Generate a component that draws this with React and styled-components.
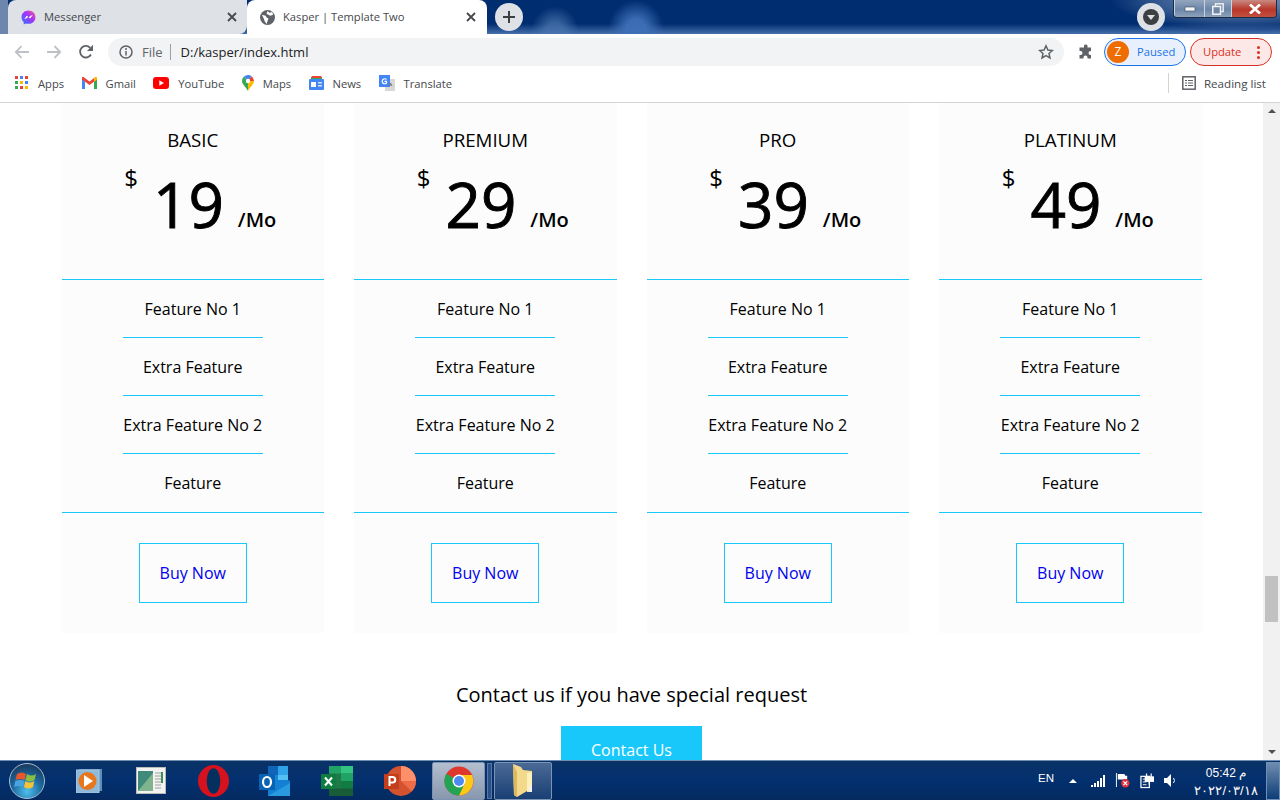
// Imports
import React from "react";
import styled, { createGlobalStyle } from "styled-components";

// Data
const plans = [
	{ name: "BASIC", price: 19 },
	{ name: "PREMIUM", price: 29 },
	{ name: "PRO", price: 39 },
	{ name: "PLATINUM", price: 49 },
];
const features = ["Feature No 1", "Extra Feature", "Extra Feature No 2", "Feature"];

// Small drawings
const Close = () => (
	<svg width="10" height="10" viewBox="0 0 10 10"><path d="M1 1l8 8M9 1l-8 8" stroke="#45484d" strokeWidth="1.8" /></svg>
);

const Plus = () => (
	<svg width="12" height="12" viewBox="0 0 12 12"><path d="M6 0v12M0 6h12" stroke="#3c4043" strokeWidth="2" /></svg>
);

const Globe = () => (
	<svg width="15" height="15" viewBox="0 0 16 16">
		<circle cx="8" cy="8" r="8" fill="#5f6368" />
		<path d="M2 5l4 1 1 2 2 1-1 3-1 3-2-3-1-3zM8 1l2 2 3-1 1 3-3 1-2-1-2-1z" fill="#fff" />
	</svg>
);

const Messenger = () => (
	<svg width="15" height="15" viewBox="0 0 16 16">
		<defs>
			<linearGradient id="ms" x1="0" y1="1" x2="1" y2="0">
				<stop offset="0" stopColor="#2a7bff" />
				<stop offset=".55" stopColor="#a033ff" />
				<stop offset="1" stopColor="#ff5c87" />
			</linearGradient>
		</defs>
		<path d="M8 .5C3.8.5.6 3.5.6 7.6c0 2.1.9 4 2.3 5.2V15.500l2.300-1.200c.9.300 1.800.4 2.800.4 4.200 0 7.400-3 7.400-7.100S12.200.5 8 .5z" fill="url(#ms)" />
		<path d="M3.500 9.800l2.500-3.700 2.200 1.600 2.200-1.600 2.100-.8-2.700 3.700-2.200-1.600-2.100 1.600z" fill="#fff" />
	</svg>
);

const Back = ({ flip }) => (
	<svg width="16" height="14" viewBox="0 0 16 14" style={ flip ? { transform: "scaleX(-1)" } : undefined }>
		<path d="M15 7H2M7.500 1.200L1.800 7l5.700 5.800" fill="none" stroke="#bdc1c6" strokeWidth="1.800" />
	</svg>
);

const Reload = () => (
	<svg width="16" height="16" viewBox="0 0 16 16">
		<path d="M13 10.500A5.800 5.800 0 1 1 12.200 3.800" fill="none" stroke="#5f6368" strokeWidth="1.800" />
		<path d="M15 .8V7H9z" fill="#5f6368" />
	</svg>
);

const Info = () => (
	<svg width="14" height="14" viewBox="0 0 14 14">
		<circle cx="7" cy="7" r="6" fill="none" stroke="#5f6368" strokeWidth="1.500" />
		<path d="M7 6v4.500" stroke="#5f6368" strokeWidth="1.500" />
		<circle cx="7" cy="4" r="1" fill="#5f6368" />
	</svg>
);

const Star = () => (
	<svg width="16" height="16" viewBox="0 0 16 16">
		<path d="M8 1.800l1.900 4.200 4.500.5-3.400 3 1 4.500L8 11.700 4 14l1-4.500-3.400-3 4.500-.5z" fill="none" stroke="#5f6368" strokeWidth="1.500" />
	</svg>
);

const Puzzle = () => (
	<svg width="16" height="16" viewBox="0 0 16 16">
		<path d="M6 1.500a2 2 0 0 1 3.500 0V3.500h3.500V7h-.5a2 2 0 0 0 0 4h.5v3.500H9.500v-1a2 2 0 0 0-4 0v1H1.500V11h1a2 2 0 0 0 0-4h-1V3.500H6z" fill="#5f6368" />
	</svg>
);

const AppsGrid = () => (
	<svg width="14" height="14" viewBox="0 0 14 14">
		<rect x="0" y="0" width="3" height="3" fill="#ea4335" />
		<rect x="5" y="0" width="3" height="3" fill="#4285f4" />
		<rect x="10" y="0" width="3" height="3" fill="#ea4335" />
		<rect x="0" y="5" width="3" height="3" fill="#34a853" />
		<rect x="5" y="5" width="3" height="3" fill="#fbbc04" />
		<rect x="10" y="5" width="3" height="3" fill="#4285f4" />
		<rect x="0" y="10" width="3" height="3" fill="#34a853" />
		<rect x="5" y="10" width="3" height="3" fill="#ea4335" />
		<rect x="10" y="10" width="3" height="3" fill="#fbbc04" />
	</svg>
);

const Gmail = () => (
	<svg width="15" height="12" viewBox="0 0 15 12">
		<path d="M0 1.500V12h3V4.500z" fill="#4285f4" />
		<path d="M15 1.500V12h-3V4.500z" fill="#34a853" />
		<path d="M0 0v2.500l7.500 5.500L15 2.500V0l-1.500 0L7.500 4.500 1.500 0z" fill="#ea4335" />
		<path d="M12 1.200L13.500 0H15v2.500L12 4.700z" fill="#fbbc04" />
	</svg>
);

const YouTube = () => (
	<svg width="16" height="12" viewBox="0 0 16 12">
		<rect width="16" height="12" rx="3" fill="#f00" />
		<path d="M6.300 3.300L11 6l-4.700 2.700z" fill="#fff" />
	</svg>
);

const Maps = () => (
	<svg width="12" height="16" viewBox="0 0 12 16">
		<path d="M6 16C4.500 12.800 0 9.500 0 6a6 6 0 0 1 2-4.500L6 6z" fill="#34a853" />
		<path d="M2 1.500A6 6 0 0 1 6 0c1.500 0 2.600.5 3.500 1.300L6 6z" fill="#4285f4" />
		<path d="M9.500 1.300A6 6 0 0 1 12 6L6 6z" fill="#ea4335" />
		<path d="M12 6c0 3.500-4.500 6.800-6 10L6 6z" fill="#fbbc04" />
		<circle cx="6" cy="6" r="2.200" fill="#fff" />
	</svg>
);

const News = () => (
	<svg width="15" height="14" viewBox="0 0 15 14">
		<path d="M2 1h11v3H2z" fill="#34a853" />
		<path d="M3 0h9l1 2H2z" fill="#ea4335" />
		<rect y="3" width="15" height="11" rx="1" fill="#4285f4" />
		<rect x="2" y="6" width="5" height="5" fill="#fff" />
		<rect x="9" y="6" width="4" height="1.500" fill="#d2e3fc" />
		<rect x="9" y="9" width="4" height="1.500" fill="#d2e3fc" />
	</svg>
);

const TranslateIcon = () => (
	<svg width="16" height="16" viewBox="0 0 16 16">
		<rect x="6" y="4" width="10" height="12" fill="#d8d8d8" />
		<path d="M0 0h11v12H0z" fill="#4285f4" />
		<path d="M9 9l1.500-3 1.500 3M9.500 8h2" stroke="#777" strokeWidth="1" fill="none" transform="translate(1 2)" />
		<path d="M7.500 4.500A2.500 2.500 0 1 0 7.500 8V6.300H5.500" fill="none" stroke="#fff" strokeWidth="1.200" />
	</svg>
);

const ReadingIcon = () => (
	<svg width="14" height="14" viewBox="0 0 14 14">
		<rect x=".8" y=".8" width="12.400" height="12.400" fill="none" stroke="#5f6368" strokeWidth="1.500" />
		<path d="M3 4.500h2M6 4.500h5M3 7h2M6 7h5M3 9.500h2M6 9.500h5" stroke="#5f6368" strokeWidth="1.200" />
	</svg>
);

// Window button glyphs
const MinGlyph = () => (
	<svg width="12" height="6" viewBox="0 0 12 6"><rect x="1" y="1" width="10" height="4" fill="#f4f4f4" stroke="#3a4a60" strokeWidth=".6" /></svg>
);

const RestoreGlyph = () => (
	<svg width="12" height="12" viewBox="0 0 12 12">
		<rect x="3.500" y=".8" width="7.700" height="7.700" fill="none" stroke="#e8ecf2" strokeWidth="1.500" />
		<rect x=".8" y="3.500" width="7.700" height="7.700" fill="#7088a8" stroke="#f4f4f4" strokeWidth="1.500" />
	</svg>
);

const CloseGlyph = () => (
	<svg width="14" height="10" viewBox="0 0 14 10"><path d="M2 .5l10 9M12 .5l-10 9" stroke="#fff" strokeWidth="2.800" /></svg>
);

// Taskbar icons
const StartOrb = () => (
	<svg width="38" height="38" viewBox="0 0 38 38">
		<defs>
			<radialGradient id="orb" cx=".5" cy=".8" r=".75">
				<stop offset="0" stopColor="#4fc0ee" />
				<stop offset=".55" stopColor="#1d6aa0" />
				<stop offset="1" stopColor="#1a3d63" />
			</radialGradient>
		</defs>
		<circle cx="19" cy="19" r="17.500" fill="url(#orb)" stroke="#a9bed1" strokeWidth="1" />
		<path d="M9 12c3-2 6-2 9 0l-1.500 6c-3-1.500-6-1.500-9 0z" fill="#e8562a" />
		<path d="M19 12c3 2 6 2 9 0l-1.500 6c-3 2-6 2-9 0z" fill="#8cbf3f" />
		<path d="M7.300 19c3-1.500 6-1.500 9 0L15 25c-3-1.500-6-1.500-9 0z" fill="#4aa3e0" />
		<path d="M17.300 19c3 2 6 2 9 0L25 25c-3 2-6 2-9 0z" fill="#f6c23a" />
	</svg>
);

const MediaPlayer = () => (
	<svg width="26" height="25" viewBox="0 0 26 25">
		<rect x="3" y="1" width="23" height="22" fill="#5f8fb8" />
		<rect x="0" y="2" width="23" height="23" fill="#8fb9d8" stroke="#a8c8e2" />
		<circle cx="11.500" cy="13" r="9" fill="#e8761c" />
		<path d="M8 7l9 6-9 6z" fill="#fff" />
	</svg>
);

const AppWindow = () => (
	<svg width="30" height="27" viewBox="0 0 30 27">
		<rect x=".5" y=".5" width="29" height="26" fill="#f2f3f0" stroke="#b8bcb8" />
		<rect x="2" y="4" width="15" height="20" fill="#3f8a7a" />
		<path d="M2 24L17 6v18z" fill="#7fb48f" />
		<path d="M19 6h6M19 9h6M19 12h6M19 15h6M19 18h6M19 21h6" stroke="#9aa09c" />
		<rect x="25" y="5" width="2" height="11" fill="#3d8f5a" />
	</svg>
);

const Opera = () => (
	<svg width="31" height="32" viewBox="0 0 31 32">
		<ellipse cx="15.500" cy="16" rx="15.500" ry="16" fill="#d5121e" />
		<ellipse cx="15.500" cy="16" rx="6.800" ry="12.800" fill="#03305f" />
	</svg>
);

const Outlook = () => (
	<svg width="32" height="30" viewBox="0 0 32 30">
		<rect x="9" y="0" width="10" height="9" fill="#0f66b8" />
		<rect x="19" y="0" width="10" height="9" fill="#2fa2e8" />
		<rect x="9" y="9" width="10" height="9" fill="#1a86d8" />
		<rect x="19" y="9" width="10" height="9" fill="#52c0f0" />
		<path d="M9 14l20 0 2 1v15H9z" fill="#1480d4" />
		<path d="M9 30l22-13v13z" fill="#2a9ae0" />
		<rect x="0" y="8" width="16" height="16" fill="#0a62b4" />
		<ellipse cx="8" cy="16" rx="4" ry="5" fill="none" stroke="#fff" strokeWidth="2.200" />
	</svg>
);

const Excel = () => (
	<svg width="32" height="30" viewBox="0 0 32 30">
		<rect x="8" y="0" width="24" height="30" fill="#1f7a4a" />
		<rect x="20" y="0" width="12" height="7.500" fill="#33c481" />
		<rect x="8" y="0" width="12" height="7.500" fill="#21a366" />
		<rect x="20" y="7.500" width="12" height="7.500" fill="#21a366" />
		<rect x="20" y="15" width="12" height="7.500" fill="#107c41" />
		<rect x="20" y="22.500" width="12" height="7.500" fill="#185c37" />
		<rect x="8" y="22.500" width="12" height="7.500" fill="#185c37" />
		<rect x="0" y="8" width="15" height="15" fill="#107c41" />
		<path d="M4 11.500l7 8M11 11.500l-7 8" stroke="#fff" strokeWidth="2" />
	</svg>
);

const PowerPoint = () => (
	<svg width="32" height="30" viewBox="0 0 32 30">
		<circle cx="17" cy="15" r="15" fill="#d35230" />
		<path d="M17 0a15 15 0 0 1 15 15H17z" fill="#ff8f6b" />
		<path d="M17 15h15a15 15 0 0 1-4.400 10.600z" fill="#ed6c47" />
		<rect x="0" y="8" width="15" height="15" fill="#c43e1c" />
		<path d="M5.500 20V11h3a2.700 2.700 0 0 1 0 5.500h-3" fill="none" stroke="#fff" strokeWidth="2" />
	</svg>
);

const ChromeIcon = () => (
	<svg width="30" height="30" viewBox="0 0 30 30">
		<circle cx="15" cy="15" r="14.500" fill="#e0372c" />
		<path d="M15 15L2.400 7.700A14.500 14.500 0 0 0 15 29.500l7.200-12.500z" fill="#23a455" />
		<path d="M15 9h13A14.500 14.500 0 0 1 15 29.500L21 17z" fill="#fbc916" />
		<circle cx="15" cy="15" r="6.500" fill="#fff" />
		<circle cx="15" cy="15" r="5" fill="#4d8bf0" />
	</svg>
);

const Folder = () => (
	<svg width="22" height="34" viewBox="0 0 22 34">
		<path d="M1 0l8 3 2 3 9 1v20l-3 1-2-1L5 33l-3-2z" fill="#f3d98c" />
		<path d="M15 9l5-1v19l-5 1z" fill="#fdf0bb" />
		<path d="M1 0l4 8v25L2 31z" fill="#dcb85f" />
		<rect x="17" y="22" width="3" height="6" fill="#f0f0f0" />
	</svg>
);

const Signal = () => (
	<svg width="14" height="12" viewBox="0 0 14 12">
		<path d="M0 10h2v2H0zM3 8h2v4H3zM6 6h2v6H6zM9 3h2v9H9zM12 0h2v12h-2z" fill="#fff" />
	</svg>
);

const ActionFlag = () => (
	<svg width="15" height="15" viewBox="0 0 16 16">
		<path d="M1 0h1v15H1z" fill="#fff" />
		<path d="M3 1h7l1 2 2 0v4H3z" fill="#fff" />
		<circle cx="11" cy="11" r="4.500" fill="#e0303a" />
		<path d="M9 9l4 4M13 9l-4 4" stroke="#fff" strokeWidth="1.300" />
	</svg>
);

const Power = () => (
	<svg width="14" height="16" viewBox="0 0 15 16">
		<rect x="1" y="3" width="9" height="12" fill="none" stroke="#fff" strokeWidth="1.300" />
		<path d="M3 6h4M3 9h4M3 12h4" stroke="#fff" />
		<path d="M7 0v4M12 0v4" stroke="#fff" strokeWidth="1.300" />
		<rect x="5" y="3" width="10" height="6" fill="#fff" />
		<path d="M10 9v3" stroke="#fff" strokeWidth="1.500" />
	</svg>
);

const Volume = () => (
	<svg width="12" height="13" viewBox="0 0 12 13">
		<path d="M0 4h3l4-4v13L3 9H0z" fill="#fff" />
		<path d="M9.500 4a4 4 0 0 1 0 5" stroke="#fff" fill="none" />
	</svg>
);

// Component
const App = () => {

	// Return
	return(
		<Screen>
			<GlobalStyle />
			<TitleBar>
				<Tab>
					<Messenger />
					<TabTitle>Messenger</TabTitle>
					<Close />
				</Tab>
				<Tab $active>
					<Globe />
					<TabTitle>Kasper | Template Two</TabTitle>
					<Close />
				</Tab>
				<NewTab><Plus /></NewTab>
				<TitleSpacer />
				<ProfileDot><i /></ProfileDot>
				<WindowButtons>
					<WinButton $w={ 30 }><MinGlyph /></WinButton>
					<WinButton $w={ 27 }><RestoreGlyph /></WinButton>
					<WinButton $w={ 47 } $close><CloseGlyph /></WinButton>
				</WindowButtons>
			</TitleBar>

			<Toolbar>
				<NavIcon><Back /></NavIcon>
				<NavIcon><Back flip /></NavIcon>
				<NavIcon><Reload /></NavIcon>
				<Omnibox>
					<Info />
					<Scheme>File</Scheme>
					<Url>D:/kasper/index.html</Url>
					<Star />
				</Omnibox>
				<PuzzleSlot><Puzzle /></PuzzleSlot>
				<Paused><Avatar>Z</Avatar><PillLabel>Paused</PillLabel></Paused>
				<Update><PillLabel>Update</PillLabel><Dots><i /><i /><i /></Dots></Update>
			</Toolbar>

			<Bookmarks>
				<Bookmark><AppsGrid />Apps</Bookmark>
				<Bookmark><Gmail />Gmail</Bookmark>
				<Bookmark><YouTube />YouTube</Bookmark>
				<Bookmark><Maps />Maps</Bookmark>
				<Bookmark><News />News</Bookmark>
				<Bookmark><TranslateIcon />Translate</Bookmark>
				<ReadingList><ReadingIcon />Reading list</ReadingList>
			</Bookmarks>

			<Viewport>
				<Page>
					<Plans>
						{ plans.map((plan) => (
							<Card key={ plan.name }>
								<CardHead>
									<PlanName>{ plan.name }</PlanName>
									<Price>
										<Currency>$</Currency>
										<Amount>{ plan.price }</Amount>
										<Period>/Mo</Period>
									</Price>
								</CardHead>
								<FeatureList>
									{ features.map((feature) => (
										<FeatureItem key={ feature }>{ feature }</FeatureItem>
									)) }
								</FeatureList>
								<CardFoot>
									<BuyLink href="#">Buy Now</BuyLink>
								</CardFoot>
							</Card>
						)) }
					</Plans>
					<Special>Contact us if you have special request</Special>
					<ContactButton>Contact Us</ContactButton>
				</Page>
				<Scrollbar>
					<ArrowUp />
					<Thumb />
					<ArrowDown />
				</Scrollbar>
			</Viewport>

			<Taskbar>
				<Orb><StartOrb /></Orb>
				<TaskIcon $w={ 62 }><MediaPlayer /></TaskIcon>
				<TaskIcon $w={ 62 }><AppWindow /></TaskIcon>
				<TaskIcon $w={ 62 }><Opera /></TaskIcon>
				<TaskIcon $w={ 62 }><Outlook /></TaskIcon>
				<TaskIcon $w={ 62 }><Excel /></TaskIcon>
				<TaskIcon $w={ 64 }><PowerPoint /></TaskIcon>
				<TaskIcon $w={ 53 } $state="active"><ChromeIcon /></TaskIcon>
				<Divider />
				<TaskIcon $w={ 58 } $state="open"><Folder /></TaskIcon>
				<TaskSpacer />
				<Lang>EN</Lang>
				<Tray>
					<TrayArrow />
					<Signal />
					<ActionFlag />
					<Power />
					<Volume />
				</Tray>
				<Clock>
					<span>05:42 م</span>
					<ClockDate>٢٠٢٢/٠٣/١٨</ClockDate>
				</Clock>
				<ShowDesktop />
			</Taskbar>
		</Screen>
	);

};

// Styled
const GlobalStyle = createGlobalStyle`
	html, body{
		margin: 0;
		height: 100%;
		overflow: hidden;
		background: #fff;
	}
	*{
		box-sizing: border-box;
	}
`;

const Screen = styled.div`
	width: 1280px;
	height: 800px;
	display: flex;
	flex-direction: column;
	overflow: hidden;
	font-family: "Open Sans", "Noto Sans", sans-serif;
`;

const TitleBar = styled.div`
	height: 34px;
	display: flex;
	padding-left: 8px;
	background:
		linear-gradient(90deg, #6c86ae 0 8px, transparent 8px),
		radial-gradient(ellipse 24px 26px at 555px 32px, rgba(74, 118, 174, 0.75) 35%, rgba(74, 118, 174, 0) 100%),
		radial-gradient(ellipse 28px 30px at 636px 30px, rgba(63, 112, 184, 0.95) 35%, rgba(63, 112, 184, 0) 100%),
		radial-gradient(ellipse 130px 30px at 1240px 0, #6f8db5 20%, rgba(111, 141, 181, 0) 100%),
		linear-gradient(180deg, #002c70 0%, #002c70 70%, #4670ac 100%);
	font-size: 11.2px;
	color: #45484d;
`;

const Tab = styled.div`
	width: ${ (props) => props.$active ? "240px" : "239px" };
	height: 34px;
	display: flex;
	align-items: center;
	gap: 8px;
	padding: 0 ${ (props) => props.$active ? "11px" : "10px" } 0 13px;
	border-radius: ${ (props) => props.$active ? "8px 8px 0 0" : "8px 0 8px 0" };
	background: ${ (props) => props.$active ? "#fff" : "#dee1e6" };
`;

const TabTitle = styled.span`
	flex: 1;
	margin-top: -2px;
`;

const NewTab = styled.div`
	width: 28px;
	height: 28px;
	margin: 3px 0 0 8px;
	border-radius: 50%;
	background: #dee1e6;
	display: flex;
	align-items: center;
	justify-content: center;
`;

const TitleSpacer = styled.div`
	flex: 1;
`;

const ProfileDot = styled.div`
	width: 28px;
	height: 28px;
	margin: 3px 8px 0 0;
	border-radius: 50%;
	background: #dee1e6;
	display: flex;
	align-items: center;
	justify-content: center;
	i{
		width: 16px;
		height: 16px;
		border-radius: 50%;
		background: #3c4043;
		position: relative;
		&::after{
			content: "";
			position: absolute;
			left: 4px;
			top: 6px;
			border: 4px solid transparent;
			border-top: 5px solid #dee1e6;
			border-bottom: 0;
		}
	}
`;

const WindowButtons = styled.div`
	width: 104px;
	height: 18px;
	margin-right: 3px;
	display: flex;
	border: 1px solid #1d2c44;
	border-top: 0;
	border-radius: 0 0 4px 4px;
	overflow: hidden;
`;

const WinButton = styled.div`
	flex: 0 0 ${ (props) => props.$w }px;
	display: flex;
	align-items: center;
	justify-content: center;
	background: ${ (props) => props.$close
		? "linear-gradient(180deg, #c98a82, #b8372a 55%, #c25040)"
		: "linear-gradient(180deg, #94a6bf, #6b86a8 55%, #8ea2bb)" };
	border-left: 1px solid #c8d3e0;
`;

const Toolbar = styled.div`
	height: 34px;
	display: flex;
	align-items: center;
	padding: 2px 8px 0 14px;
	background: #fff;
`;

const NavIcon = styled.div`
	width: 32px;
	flex-shrink: 0;
	display: flex;
	align-items: center;
`;

const Omnibox = styled.div`
	width: 956px;
	height: 28px;
	flex-shrink: 0;
	margin-left: -2px;
	display: flex;
	align-items: center;
	padding: 0 10px 0 11px;
	border-radius: 14px;
	background: #f1f3f4;
	font-size: 13px;
`;

const Scheme = styled.span`
	margin-left: 9px;
	padding-right: 7px;
	border-right: 1px solid #9aa0a6;
	line-height: 16px;
	color: #5f6368;
`;

const Url = styled.span`
	flex: 1;
	margin-left: 10px;
	color: #202124;
`;

const PuzzleSlot = styled.div`
	width: 40px;
	flex-shrink: 0;
	padding-left: 14px;
	display: flex;
`;

const Paused = styled.div`
	width: 82px;
	height: 28px;
	flex-shrink: 0;
	display: flex;
	align-items: center;
	gap: 8px;
	padding-left: 2px;
	border: 1px solid #1a73e8;
	border-radius: 14px;
	background: #e8f0fe;
	color: #1a73e8;
	font-size: 11.2px;
`;

const PillLabel = styled.span`
	margin-top: -2px;
`;

const Avatar = styled.span`
	width: 22px;
	height: 22px;
	border-radius: 50%;
	background: #ef6c00;
	color: #fff;
	font-size: 12px;
	text-align: center;
	line-height: 22px;
`;

const Update = styled.div`
	width: 82px;
	height: 28px;
	flex-shrink: 0;
	margin-left: 4px;
	display: flex;
	align-items: center;
	justify-content: space-between;
	padding: 0 11px 0 12px;
	border: 1px solid #d93025;
	border-radius: 14px;
	background: #fce8e6;
	color: #d93025;
	font-size: 11.2px;
`;

const Dots = styled.span`
	display: flex;
	flex-direction: column;
	gap: 2px;
	i{
		width: 3px;
		height: 3px;
		border-radius: 50%;
		background: #d93025;
	}
`;

const Bookmarks = styled.div`
	height: 35px;
	display: flex;
	align-items: center;
	gap: 17.4px;
	padding: 0 14px 4px 15px;
	background: #fff;
	border-bottom: 1px solid #d3d3d3;
`;

const Bookmark = styled.div`
	display: flex;
	align-items: center;
	gap: 9px;
	font-size: 11.2px;
	color: #45484d;
`;

const ReadingList = styled(Bookmark)`
	height: 20px;
	margin-left: auto;
	padding-left: 13px;
	gap: 8px;
	border-left: 1px solid #d3d3d3;
	font-size: 11.6px;
`;

const Viewport = styled.div`
	height: 657px;
	display: flex;
	overflow: hidden;
`;

const Page = styled.div`
	flex: 1;
	background: #fff;
	text-align: center;
`;

const Plans = styled.div`
	width: 1140px;
	margin: 0 auto;
	display: grid;
	grid-template-columns: repeat(4, 262.5px);
	gap: 30px;
`;

const Card = styled.div`
	background: #fcfcfc;
`;

const CardHead = styled.div`
	height: 177px;
	padding-top: 23px;
	border-bottom: 1px solid #19c8fa;
`;

const PlanName = styled.div`
	font-size: 18.72px;
	line-height: 28px;
	color: #000;
`;

const Price = styled.div`
	display: flex;
	align-items: flex-start;
	justify-content: center;
	height: 82px;
	margin-top: 7px;
	padding-left: 15px;
	color: #000;
`;

const Currency = styled.span`
	font-size: 24px;
	line-height: 33px;
`;

const Amount = styled.span`
	font-size: 62px;
	-webkit-text-stroke: 0.9px #000;
	line-height: 82px;
	margin: 2px 0 0 15px;
`;

const Period = styled.span`
	font-size: 20px;
	font-weight: 600;
	line-height: 28px;
	margin: 45px 0 0 14px;
`;

const FeatureList = styled.ul`
	margin: 0;
	padding: 0;
	list-style: none;
	border-bottom: 1px solid #19c8fa;
`;

const FeatureItem = styled.li`
	height: 58px;
	display: flex;
	align-items: center;
	justify-content: center;
	position: relative;
	font-size: 16px;
	color: #000;
	&:not(:last-child)::after{
		content: "";
		position: absolute;
		left: 50%;
		bottom: 0;
		width: 140px;
		height: 1px;
		margin-left: -70px;
		background: #19c8fa;
	}
`;

const CardFoot = styled.div`
	padding: 30px 0;
`;

const BuyLink = styled.a`
	display: block;
	width: 108px;
	height: 60px;
	margin: 0 auto;
	border: 1px solid #19c8fa;
	color: #0000ee;
	font-size: 16px;
	line-height: 58px;
	text-decoration: none;
`;

const Special = styled.div`
	margin-top: 48px;
	font-size: 20px;
	line-height: 27px;
	color: #000;
`;

const ContactButton = styled.div`
	width: 141px;
	height: 60px;
	margin: 18px auto 0;
	background: #19c8fa;
	color: #fff;
	font-size: 16px;
	line-height: 48px;
`;

const Scrollbar = styled.div`
	width: 17px;
	display: flex;
	flex-direction: column;
	align-items: center;
	background: #f1f1f1;
`;

const ArrowUp = styled.div`
	margin-top: 6px;
	border: 4px solid transparent;
	border-top: 0;
	border-bottom: 4px solid #505050;
`;

const Thumb = styled.div`
	width: 13px;
	height: 46px;
	margin-top: 463px;
	background: #c1c1c1;
`;

const ArrowDown = styled.div`
	margin-top: auto;
	margin-bottom: 6px;
	border: 4px solid transparent;
	border-bottom: 0;
	border-top: 4px solid #505050;
`;

const Taskbar = styled.div`
	height: 40px;
	display: flex;
	align-items: center;
	border-top: 1px solid #6f8fb5;
	background: linear-gradient(180deg, #0a3266 0%, #03306f 50%, #042a60 100%);
	color: #fff;
`;

const Orb = styled.div`
	width: 58px;
	flex-shrink: 0;
	padding-left: 8px;
	display: flex;
`;

const TaskIcon = styled.div`
	width: ${ (props) => props.$w }px;
	height: 38px;
	flex-shrink: 0;
	display: flex;
	align-items: center;
	justify-content: center;
	border-radius: 2px;
	border: ${ (props) => props.$state ? "1px solid #7c93b3" : "0" };
	background: ${ (props) => props.$state === "active"
		? "linear-gradient(180deg, #b4bfcf, #8797ad)"
		: props.$state === "open" ? "linear-gradient(180deg, #4a6a96, #1a3f74)" : "transparent" };
`;

const Divider = styled.div`
	width: 5px;
	height: 36px;
	margin: 0 2px;
	border: 1px solid #5a7aa5;
	background: #2a5088;
`;

const TaskSpacer = styled.div`
	flex: 1;
`;

const Lang = styled.div`
	font-family: "Liberation Sans", sans-serif;
	font-size: 11.5px;
	margin: -6px 15px 0 0;
`;

const Tray = styled.div`
	display: flex;
	align-items: center;
	gap: 10px;
`;

const TrayArrow = styled.span`
	margin-right: 4px;
	border: 4px solid transparent;
	border-top: 0;
	border-bottom: 4px solid #fff;
`;

const Clock = styled.div`
	width: 72px;
	margin: 0 4px 0 14px;
	padding-top: 2px;
	display: flex;
	flex-direction: column;
	align-items: center;
	font-family: "Liberation Sans", sans-serif;
	font-size: 12px;
	line-height: 18px;
`;

const ClockDate = styled.span`
	font-size: 13px;
	letter-spacing: 0.2px;
	white-space: nowrap;
`;

const ShowDesktop = styled.div`
	width: 14px;
	height: 38px;
	border: 1px solid #6f8fb5;
	background: linear-gradient(180deg, #6f8cb0, #0c3d76);
`;

// Export
export default App;
